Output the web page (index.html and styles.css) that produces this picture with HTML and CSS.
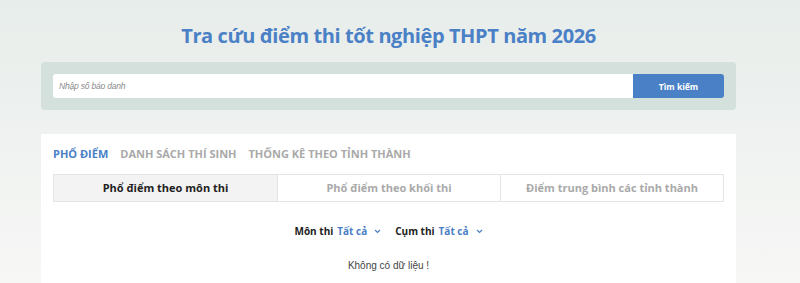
FILE: index.html
```html
<!DOCTYPE html>
<html lang="vi">
<head>
  <meta charset="UTF-8" />
  <meta name="viewport" content="width=device-width, initial-scale=1.0" />
  <title>Tra cứu điểm thi tốt nghiệp THPT</title>
  <link rel="stylesheet" href="styles.css">
</head>
<body>
  <div class="page">
    <h1 class="title">Tra cứu điểm thi tốt nghiệp THPT năm 2026</h1>

    <!-- ô tìm kiếm -->
    <form class="search">
      <input class="search-input" type="text" placeholder="Nhập số báo danh">
      <button class="search-btn" type="button">Tìm kiếm</button>
    </form>

    <!-- khối phổ điểm -->
    <div class="card">
      <div class="tabs">
        <span class="tab active">PHỔ ĐIỂM</span>
        <span class="tab">DANH SÁCH THÍ SINH</span>
        <span class="tab">THỐNG KÊ THEO TỈNH THÀNH</span>
      </div>

      <div class="subtabs">
        <div class="subtab active">Phổ điểm theo môn thi</div>
        <div class="subtab">Phổ điểm theo khối thi</div>
        <div class="subtab">Điểm trung bình các tỉnh thành</div>
      </div>

      <div class="filters">
        <div class="filter">
          <span class="filter-label">Môn thi</span>
          <span class="filter-value">Tất cả</span>
          <svg class="chev" width="7" height="5" viewBox="0 0 7 5"><path d="M1 1l2.5 2.5L6 1" fill="none" stroke="currentColor" stroke-width="1.2"/></svg>
        </div>
        <div class="filter">
          <span class="filter-label">Cụm thi</span>
          <span class="filter-value">Tất cả</span>
          <svg class="chev" width="7" height="5" viewBox="0 0 7 5"><path d="M1 1l2.5 2.5L6 1" fill="none" stroke="currentColor" stroke-width="1.2"/></svg>
        </div>
      </div>

      <p class="empty">Không có dữ liệu !</p>
    </div>
  </div>
</body>
</html>
```

FILE: styles.css
```css
/* ========== màu chủ đạo ========== */
:root {
  --blue:   #4a80c6;
  --panel:  #d3e0dc;
  --border: #e4e4e4;
  --muted:  #a9a9a9;
}

* { box-sizing: border-box; margin: 0; padding: 0; }
html, body { height: 100%; }
body {
  background: linear-gradient(#e7edea, #f7f7f6);
  font-family: "Open Sans", "Noto Sans", sans-serif;
  color: #222;
}

.page {
  width: 695px;
  margin-left: 41px;
  padding-top: 21px;
}

/* ====== tiêu đề ====== */
.title {
  text-align: center;
  font-size: 20px;
  font-weight: 700;
  line-height: 30px;
  color: var(--blue);
  letter-spacing: -0.4px;
}

/* ====== tìm kiếm ====== */
.search {
  margin-top: 11px;
  display: flex;
  padding: 12px;
  background: var(--panel);
  border-radius: 4px;
}
.search-input {
  flex: 1;
  height: 24px;
  border: none;
  border-radius: 3px 0 0 3px;
  padding: 0 6px;
  font-family: "Liberation Sans", sans-serif;
  font-size: 8.5px;
  font-style: italic;
  letter-spacing: -0.2px;
  outline: none;
}
.search-input::placeholder { color: #8a8a8a; }
.search-btn {
  width: 91px;
  height: 24px;
  border: none;
  border-radius: 0 3px 3px 0;
  background: var(--blue);
  color: #fff;
  font-family: "Open Sans", sans-serif;
  font-size: 8.5px;
  font-weight: 700;
}

/* ====== khối nội dung ====== */
.card {
  margin-top: 24px;
  background: #fff;
  padding: 12px 12px 10px;
  min-height: 160px;
}
.tabs {
  display: flex;
  gap: 12px;
  line-height: 16px;
}
.tab {
  font-size: 11px;
  font-weight: 700;
  color: var(--muted);
}
.tab.active { color: var(--blue); }

.subtabs {
  margin-top: 12px;
  display: grid;
  grid-template-columns: repeat(3, 1fr);
  border: 1px solid var(--border);
}
.subtab {
  height: 26px;
  line-height: 26px;
  text-align: center;
  font-size: 11px;
  font-weight: 700;
  color: var(--muted);
}
.subtab + .subtab { border-left: 1px solid var(--border); }
.subtab.active { background: #f3f3f3; color: #222; }

.filters {
  margin-top: 20px;
  display: flex;
  justify-content: center;
  gap: 14px;
  line-height: 18px;
  font-size: 10px;
  font-weight: 700;
}
.filter { display: flex; align-items: center; gap: 4px; }
.filter-value { color: var(--blue); }
.chev { color: var(--blue); margin-left: 3px; }

.empty {
  margin-top: 20px;
  text-align: center;
  font-family: "Liberation Sans", sans-serif;
  font-size: 10px;
  color: #444;
}
```
